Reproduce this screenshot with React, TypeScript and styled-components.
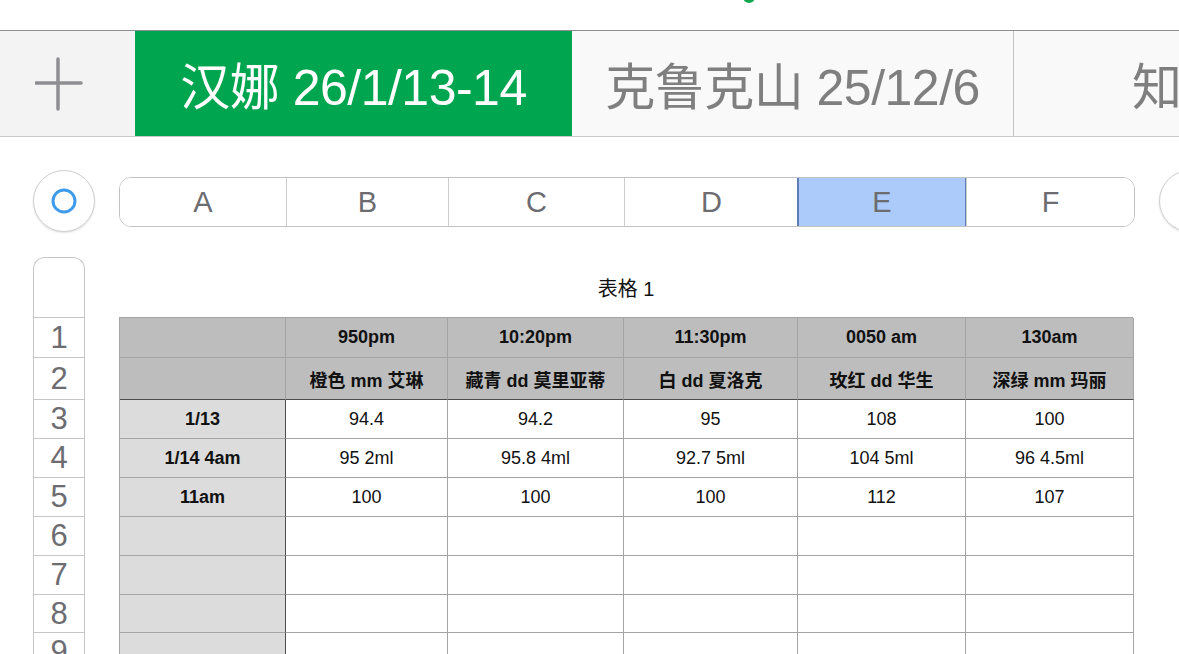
import React from "react";
import styled, { createGlobalStyle } from "styled-components";

/*--------------------------------------------------------------*/

const GlobalStyle = createGlobalStyle`
  html, body {
    margin: 0;
    padding: 0;
    background: #ffffff;
  }
  body {
    font-family: "Liberation Sans", "Noto Sans CJK SC", sans-serif;
  }
`;

/*--------------------------------------------------------------*/

const columns = [
  { letter: "A", width: 166 },
  { letter: "B", width: 162 },
  { letter: "C", width: 176 },
  { letter: "D", width: 174 },
  { letter: "E", width: 168 },
  { letter: "F", width: 168 },
];

const rowHeights = [40, 42, 39, 39, 39, 39, 39, 38, 39, 39];

// Table content, row by row
const headRows = [
  ["", "950pm", "10:20pm", "11:30pm", "0050 am", "130am"],
  ["", "橙色 mm 艾琳", "藏青 dd 莫里亚蒂", "白 dd 夏洛克", "玫红 dd 华生", "深绿 mm 玛丽"],
];

const bodyRows = [
  ["1/13", "94.4", "94.2", "95", "108", "100"],
  ["1/14 4am", "95 2ml", "95.8 4ml", "92.7 5ml", "104 5ml", "96 4.5ml"],
  ["11am", "100", "100", "100", "112", "107"],
  ["", "", "", "", "", ""],
  ["", "", "", "", "", ""],
  ["", "", "", "", "", ""],
  ["", "", "", "", "", ""],
  ["", "", "", "", "", ""],
];

/*--------------------------------------------------------------*/

export default function App() {
  return (
    <>
      <GlobalStyle />
      <Page>
        <StatusStrip>
          <StatusDot />
        </StatusStrip>

        {/* -------------------------------------------------------------- */}

        <TabBar>
          <PlusTab>
            <svg width="48" height="54" viewBox="0 0 48 54">
              <path
                d="M23 2 V52 M1 26 H46"
                stroke="#8e8e93"
                strokeWidth="3.5"
                strokeLinecap="round"
              />
            </svg>
          </PlusTab>
          <SheetTab $active $width={437}>
            汉娜 26/1/13-14
          </SheetTab>
          <SheetTab $width={441}>克鲁克山 25/12/6</SheetTab>
          <SheetTab $width={441} $lead={118} $divided>
            知
          </SheetTab>
        </TabBar>

        {/* -------------------------------------------------------------- */}

        <ColumnBarRow>
          <RoundButton>
            <svg width="28" height="28" viewBox="0 0 28 28">
              <circle cx="14" cy="14" r="11" fill="none" stroke="#3e9bea" strokeWidth="3" />
            </svg>
          </RoundButton>
          <ColumnBar>
            {columns.map((col) => (
              <ColumnLetter key={col.letter} $width={col.width} $selected={col.letter === "E"}>
                {col.letter}
              </ColumnLetter>
            ))}
          </ColumnBar>
          <RoundButton />
        </ColumnBarRow>

        {/* -------------------------------------------------------------- */}

        <SheetRow>
          <RowHeaders>
            <RowCorner />
            {rowHeights.map((h, i) => (
              <RowNumber key={i} $height={h}>
                {i + 1}
              </RowNumber>
            ))}
          </RowHeaders>

          <TableArea>
            <TableTitle>表格 1</TableTitle>
            <Grid>
              {headRows.map((row, r) =>
                row.map((text, c) => (
                  <Cell
                    key={`h${r}-${c}`}
                    $height={rowHeights[r]}
                    $kind="head"
                    $bold
                    $strongBottom={r === 1}
                  >
                    {text}
                  </Cell>
                ))
              )}
              {bodyRows.map((row, r) =>
                row.map((text, c) => (
                  <Cell
                    key={`b${r}-${c}`}
                    $height={rowHeights[r + 2]}
                    $kind={c === 0 ? "side" : "body"}
                    $bold={c === 0}
                    $strongRight={c === 0}
                  >
                    {text}
                  </Cell>
                ))
              )}
            </Grid>
          </TableArea>
        </SheetRow>
      </Page>
    </>
  );
}

/*--------------------------------------------------------------*/

const Page = styled.div`
  width: 1179px;
  height: 654px;
  overflow: hidden;
  display: flex;
  flex-direction: column;
  background: #ffffff;
`;

const StatusStrip = styled.div`
  height: 30px;
  flex-shrink: 0;
  display: flex;
  padding-left: 743px;
`;

const StatusDot = styled.div`
  width: 12px;
  height: 12px;
  margin-top: -9px;
  border-radius: 50%;
  background: #13a64f;
`;

const TabBar = styled.div`
  height: 107px;
  flex-shrink: 0;
  box-sizing: border-box;
  display: flex;
  border-top: 1px solid #8f8f8f;
  border-bottom: 1px solid #c9c9c9;
  background: #f9f9fa;
  overflow: hidden;
`;

const PlusTab = styled.div`
  width: 135px;
  flex-shrink: 0;
  display: flex;
  align-items: center;
  padding-left: 35px;
  box-sizing: border-box;
  background: #f3f3f4;
`;

const SheetTab = styled.div<{ $active?: boolean; $width: number; $lead?: number; $divided?: boolean }>`
  width: ${({ $width }) => $width}px;
  flex-shrink: 0;
  display: flex;
  align-items: center;
  justify-content: ${({ $lead }) => ($lead ? "flex-start" : "center")};
  padding-left: ${({ $lead }) => $lead || 0}px;
  box-sizing: border-box;
  padding-bottom: 2px;
  font-size: 50px;
  letter-spacing: -0.5px;
  white-space: nowrap;
  color: ${({ $active }) => ($active ? "#ffffff" : "#7f7f7f")};
  background: ${({ $active }) => ($active ? "#00a64f" : "#f9f9fa")};
  border-left: ${({ $divided }) => ($divided ? "1px solid #c4c4c4" : "none")};
`;

/*--------------------------------------------------------------*/

const ColumnBarRow = styled.div`
  display: flex;
  align-items: center;
  gap: 24px;
  margin-top: 33px;
  padding-left: 33px;
  height: 62px;
  flex-shrink: 0;
`;

const RoundButton = styled.div`
  width: 62px;
  height: 62px;
  flex-shrink: 0;
  box-sizing: border-box;
  border-radius: 50%;
  border: 1px solid #cfcfcf;
  background: #ffffff;
  box-shadow: 0 1px 2px rgba(0, 0, 0, 0.12);
  display: flex;
  align-items: center;
  justify-content: center;
`;

const ColumnBar = styled.div`
  display: flex;
  height: 50px;
  flex-shrink: 0;
  box-sizing: border-box;
  border: 1px solid #c2c2c2;
  border-radius: 12px;
  overflow: hidden;
  margin-top: 2px;
`;

const ColumnLetter = styled.div<{ $width: number; $selected?: boolean }>`
  width: ${({ $width }) => $width}px;
  flex-shrink: 0;
  box-sizing: border-box;
  display: flex;
  align-items: center;
  justify-content: center;
  font-size: 29px;
  color: #6c6c71;
  background: ${({ $selected }) => ($selected ? "#adcbfa" : "#ffffff")};
  border-left: 1px solid ${({ $selected }) => ($selected ? "#5e7db6" : "#cdcdcd")};
  ${({ $selected }) => ($selected ? "border-right: 1px solid #5e7db6; outline: 1px solid #5e7db6;" : "")}

  &:first-child {
    border-left: none;
  }
`;

/*--------------------------------------------------------------*/

const SheetRow = styled.div`
  display: flex;
  margin-top: 25px;
  padding-left: 33px;
  gap: 34px;
`;

const RowHeaders = styled.div`
  width: 52px;
  flex-shrink: 0;
  box-sizing: border-box;
  border: 1px solid #c6c6c6;
  border-bottom: none;
  border-radius: 12px 12px 0 0;
  display: flex;
  flex-direction: column;
`;

const RowCorner = styled.div`
  height: 59px;
  flex-shrink: 0;
  border-bottom: 1px solid #c6c6c6;
`;

const RowNumber = styled.div<{ $height: number }>`
  height: ${({ $height }) => $height}px;
  flex-shrink: 0;
  box-sizing: border-box;
  border-bottom: 1px solid #c6c6c6;
  display: flex;
  align-items: center;
  justify-content: center;
  font-size: 31px;
  color: #6c6c71;
`;

const TableArea = styled.div`
  display: flex;
  flex-direction: column;
`;

const TableTitle = styled.div`
  height: 60px;
  box-sizing: border-box;
  display: flex;
  align-items: center;
  justify-content: center;
  font-size: 20px;
  color: #111111;
`;

const Grid = styled.div`
  display: grid;
  grid-template-columns: ${columns.map((c) => `${c.width}px`).join(" ")};
  box-sizing: border-box;
  border-top: 1px solid #a4a4a4;
  border-left: 1px solid #a4a4a4;
  width: 1014px;
`;

const Cell = styled.div<{
  $height: number;
  $kind: "head" | "side" | "body";
  $bold?: boolean;
  $strongBottom?: boolean;
  $strongRight?: boolean;
}>`
  height: ${({ $height }) => $height}px;
  box-sizing: border-box;
  display: flex;
  align-items: center;
  justify-content: center;
  white-space: nowrap;
  font-size: 18px;
  font-weight: ${({ $bold }) => ($bold ? 700 : 400)};
  color: #111111;
  background: ${({ $kind }) =>
    $kind === "head" ? "#bdbdbd" : $kind === "side" ? "#dcdcdc" : "#ffffff"};
  border-right: 1px solid ${({ $strongRight }) => ($strongRight ? "#4d4d4d" : "#a4a4a4")};
  border-bottom: ${({ $strongBottom }) =>
    $strongBottom ? "1.5px solid #4d4d4d" : "1px solid #a4a4a4"};
`;
